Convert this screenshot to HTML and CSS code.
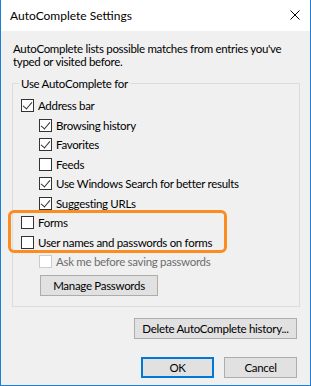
FILE: index.html
```html
<!DOCTYPE html>
<html lang="en">
<head>
  <meta charset="UTF-8" />
  <title>AutoComplete Settings</title>
  <link rel="stylesheet" href="styles.css">
</head>
<body>
  <div class="window">
    <!-- Title bar -->
    <div class="titlebar">
      <span class="title">AutoComplete Settings</span>
      <span class="close">
        <svg width="10" height="10" viewBox="0 0 10 10">
          <path d="M0.5 0.5 L9.5 9.5 M9.5 0.5 L0.5 9.5" stroke="#000" stroke-width="1" fill="none" />
        </svg>
      </span>
    </div>

    <div class="content">
      <p class="intro">AutoComplete lists possible matches from entries you've<br>typed or visited before.</p>

      <fieldset class="group">
        <legend>Use AutoComplete for</legend>
        <label class="row"><span class="box checked"></span>Address bar</label>
        <label class="row sub"><span class="box checked"></span>Browsing history</label>
        <label class="row sub"><span class="box checked"></span>Favorites</label>
        <label class="row sub"><span class="box"></span>Feeds</label>
        <label class="row sub"><span class="box checked"></span>Use Windows Search for better results</label>
        <label class="row sub"><span class="box checked"></span>Suggesting URLs</label>
        <div class="highlight">
          <label class="row"><span class="box"></span>Forms</label>
          <label class="row"><span class="box"></span>User names and passwords on forms</label>
        </div>
        <label class="row sub disabled"><span class="box"></span>Ask me before saving passwords</label>
        <button class="btn manage">Manage Passwords</button>
      </fieldset>

      <div class="history">
        <button class="btn delete">Delete AutoComplete history...</button>
      </div>

      <div class="actions">
        <button class="btn default">OK</button>
        <button class="btn">Cancel</button>
      </div>
    </div>
  </div>
</body>
</html>
```

FILE: styles.css
```css
* {
  box-sizing: border-box;
  margin: 0;
  padding: 0;
}

body {
  width: 311px;
  height: 386px;
  font-family: Lato, 'Noto Sans', sans-serif;
  font-size: 11.5px;
  letter-spacing: -0.3px;
  color: #000000;
  background: #ffffff;
  overflow: hidden;
}

/* Window frame */
.window {
  width: 311px;
  height: 386px;
  border: 1px solid #1c7fd6;
  border-top: none;
  display: flex;
  flex-direction: column;
}

.titlebar {
  height: 31px;
  background: #ffffff;
  display: flex;
  align-items: center;
  justify-content: space-between;
  padding: 0 10px 1px 9px;
}

.title {
  font-size: 12px;
  letter-spacing: 0;
}

.close {
  display: flex;
  width: 10px;
  height: 10px;
}

/* Dialog body */
.content {
  flex: 1;
  background: #f0f0f0;
  padding: 11px 10px 0 11px;
}

.intro {
  line-height: 13px;
  padding-left: 1px;
  white-space: nowrap;
}

/* Group box */
.group {
  margin-top: 9px;
  border: 1px solid #dcdcdc;
  padding: 6px 8px 10px 8px;
}

.group legend {
  line-height: 13px;
  padding: 0 2px;
  margin-left: -2px;
}

.row {
  display: flex;
  align-items: center;
  height: 19.5px;
  white-space: nowrap;
}

.row.sub {
  padding-left: 18px;
}

.box {
  position: relative;
  width: 13px;
  height: 13px;
  flex-shrink: 0;
  margin-right: 4px;
  background: #ffffff;
  border: 1px solid #333333;
}

.box.checked::after {
  content: '';
  position: absolute;
  left: 3px;
  top: 0px;
  width: 4px;
  height: 8px;
  border-right: 1px solid #333333;
  border-bottom: 1px solid #333333;
  transform: rotate(40deg);
}

.row.disabled {
  color: #6d6d6d;
}

.row.disabled .box {
  border-color: #cccccc;
}

/* Orange callout around the form rows */
.highlight {
  position: relative;
}

.highlight::before {
  content: '';
  position: absolute;
  top: -3px;
  bottom: -1px;
  left: -13px;
  width: 213px;
  border: 3px solid #fb8c1f;
  border-radius: 6px;
}

/* Buttons */
.btn {
  font-family: inherit;
  font-size: 11.5px;
  letter-spacing: -0.3px;
  color: #000000;
  height: 21px;
  background: #e1e1e1;
  border: 1px solid #adadad;
  padding: 0;
  white-space: nowrap;
}

.btn.manage {
  display: block;
  width: 118px;
  margin: 3px 0 0 19px;
}

.history {
  display: flex;
  justify-content: flex-end;
  padding-right: 3px;
  margin-top: 11px;
}

.btn.delete {
  width: 163px;
}

.actions {
  display: flex;
  justify-content: flex-end;
  gap: 10px;
  padding-right: 3px;
  margin-top: 18px;
}

.actions .btn {
  width: 73px;
}

.btn.default {
  border: 2px solid #0078d7;
}
```
